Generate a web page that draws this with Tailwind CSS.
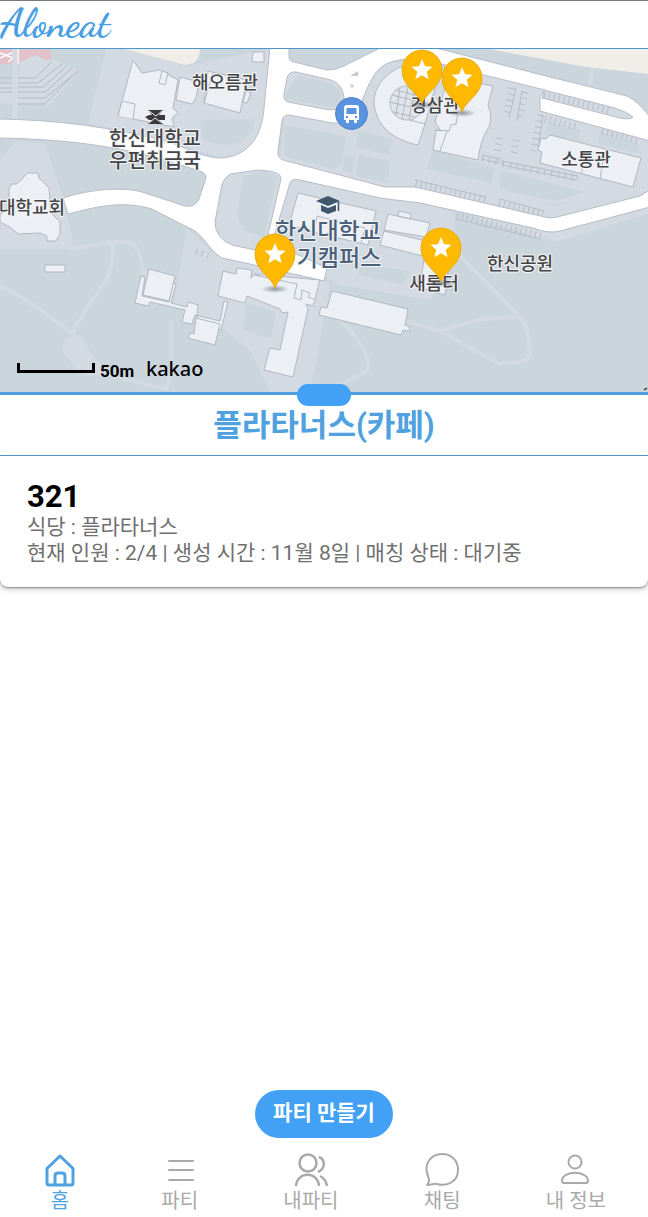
<!DOCTYPE html>
<html lang="ko">
<head>
<meta charset="utf-8">
<meta name="viewport" content="width=device-width, initial-scale=1">
<title>Aloneat</title>
<script src="https://cdn.jsdelivr.net/npm/@tailwindcss/browser@4"></script>
</head>
<body class="bg-white font-[Roboto,'Noto_Sans_CJK_KR',sans-serif]">
<div class="flex min-h-screen flex-col">
  <header class="flex h-[49px] items-center border-t border-b border-t-[#77777c] border-b-[#4b97cb]">
    <h1 class="pb-1 font-['Dancing_Script',cursive] text-[40px] font-bold leading-none text-[#4a9fe3]">Aloneat</h1>
  </header>

  <section aria-label="지도" class="h-[346px] border-b-3 border-[#4f9fe0]">
    <svg class="block h-full w-full" viewBox="0 49 648 343" preserveAspectRatio="xMidYMid slice" role="img" aria-label="한신대학교 주변 지도">
      <defs>
        <radialGradient id="pin-shadow"><stop offset="0" stop-color="#555b66" stop-opacity=".6"/><stop offset="1" stop-color="#555b66" stop-opacity="0"/></radialGradient>
        <g id="pin">
          <ellipse cx="0" cy="1" rx="14" ry="4" fill="url(#pin-shadow)"/>
          <path d="M0 0C-3-11-20-17-20-34a20 20 0 0 1 40 0C20-17 3-11 0 0Z" fill="#ffb900" stroke="#e5a50c" stroke-width=".8"/>
          <path d="M0-45l3 7.2 7.600.6-5.800 5 1.800 7.400L0-28.800l-6.600 4 1.800-7.400-5.800-5 7.600-.6Z" fill="#fff"/>
        </g>
      </defs>
      <rect y="49" width="648" height="343" fill="#cbd5dc"/>

      <!-- paved ground -->
      <g fill="#d4dae2">
        <path d="M106 49H130L185 66 270 49 263 130 245 155 222 158 170 142 88 123Z"/>
        <path d="M0 85L50 58 78 71 50 105 0 103Z"/>
        <path d="M15 141L45 144 58 182 63 198 73 241 70 249 0 249V160Z"/>
        <path d="M187 228L215 255 330 283 322 330 310 392H270L250 350 215 322 174 302Z"/>
        <path d="M285 113L345 122 358 110 370 77 390 62 648 90V195L552 218 420 188 385 187 280 160Z"/>
        <path d="M292 179L430 205 455 212 452 260 430 300 340 285 272 243Z"/>
        <path d="M222 178L243 172 262 171 238 240 222 240 215 222Z"/>
        <path d="M455 212L530 229 553 233 648 208V214L555 242Z"/>
        <path d="M66 340L80 334 96 360 110 376 82 376 61 350Z"/>
      </g>
      <path d="M125 49H205L194 63 185 65ZM488 49H648V74L585 67Z" fill="#f1eee9"/>
      <path d="M0 49H50L52 58 40 64H0Z" fill="#e2c1c8"/>
      <path d="M0 58L18 50M8 62L18 54M0 53L18 60M18 49V64" stroke="#fff" stroke-width="1.500"/>
      <path d="M20 62L36 55 50 62 51 72 40 78H20Z" fill="#d4dae2"/>
      <g fill="#cbd5dc">
        <path d="M200 120L255 119C252 144 230 151 203 139ZM198 65L225 53 238 49H200Z"/>
        <path d="M284 125L346 136 342 162 335 169 284 156ZM358 130L392 139 389 155 356 147ZM359 154L390 161 388 183 356 176ZM345 155L355 157 352 173 342 170Z"/>
        <path d="M433 150L495 168 492 183 427 169ZM500 170L588 193 555 207 500 188ZM550 122L580 130 578 141 543 134ZM600 131L636 142 641 154 598 144Z"/>
        <path d="M350 262L410 271 404 285 360 275ZM247 303L276 312 271 338 243 330ZM258 324L273 328 271 338 255 334Z"/>
      </g>
      <path d="M433 49L550 77 590 85 630 97 648 116V74L585 67 488 49Z" fill="#cbd5dc"/>
      <path d="M592 68L590 84" stroke="#d4dae2" stroke-width="4"/>

      <!-- footpaths -->
      <g fill="none" stroke="#d4dae2" stroke-width="4">
        <path d="M70 249L112 242H128C140 244 140 260 145 276M113 243C113 290 98 282 72 333M0 286C30 300 46 314 72 333L105 374 165 389M171 320V370L166 390"/>
        <path d="M456 252L520 317C527 325 530 340 530 353 528 364 515 362 500 364L440 331 320 296M440 331L480 319 520 317M335 318C350 325 375 358 366 372L325 392M430 178L555 203 588 193"/>
        <path d="M15 49V120" stroke-width="5"/>
      </g>
      <g fill="none" stroke="#b4bac4">
        <path d="M0 78H12M18 78H35L52 62M0 83H12M18 83H38L62 64M0 88H12M18 87H43L67 66M0 92H12M18 92H45L72 68M18 98H45L78 71M18 104H45L72 76"/>
      </g>

      <!-- roads -->
      <g fill="#fff" stroke="#b7bdc8" stroke-width="1">
        <path d="M-2 119C60 120 110 127 170 142C190 150 205 158 222 158C248 156 262 137 264 108L270 47H289V57Q289 61 294 62L327 70Q337 70 344 66L382 47H420L440 49 550 77 595 88 627 96Q638 101 650 117V141L540 111V97L545 90 484 75 445 65C425 58 400 57 386 64C371 72 367 91 358 110C352 126 334 124 322 121L289 115Q283 115 282 121L278 151Q277 158 283 160L385 187H415L545 217Q550 219 557 217L640 196 650 190V207L560 231Q548 234 533 228L420 203 380 198 300 180Q292 178 290 183L272 243 327 268 324 281 250 264 222 258C207 249 203 232 187 227L152 209C120 200 96 207 68 214L63 198C90 189 126 186 145 193L185 206Q197 208 200 196L206 178Q206 173 200 171L158 158C110 145 60 139-2 138Z"/>
      </g>
      <g fill="#d4dae2" stroke="#b7bdc8">
        <path d="M296 72L331 80Q343 84 344 98 344 110 330 110L288 102Q283 100 284 94L287 78Q289 71 296 72Z"/>
        <path d="M230 174L258 170Q282 171 281 179L268 235 255 250 232 245Q215 238 215 222L222 184Q224 178 230 174Z"/>
        <path d="M544 90L615 108Q627 112 633 117 632 120 620 118L542 98Z"/>
      </g>
      <path d="M297 75L330 83Q341 88 341 98 340 108 330 107L286 99V94ZM243 177L260 171Q280 174 277 180L264 237 243 230 237 215Z" fill="#cbd5dc"/>
      <path d="M350 76L358 71V76ZM350 84L354 85 352 89Z" fill="#c5c9d0"/>

      <!-- parking bays -->
      <g fill="none" stroke="#b7bdc8" stroke-width="7">
        <path d="M544 95L612 111M545 119L578 127M602 132L640 141" stroke-dasharray="1 4"/>
        <path d="M499 203L543 214M457 216L541 236M416 183L486 200" stroke-dasharray="1 4"/>
        <path d="M512 88L506 117M525 92L519 120M541 115L533 151M500 138L497 152M516 140L513 155M196 252L208 256" stroke-dasharray="1 5"/>
        <path d="M503 164L578 178M482 158L500 162" stroke-dasharray="1 6"/>
      </g>
      <g fill="none" stroke="#b7bdc8">
        <path d="M516 88L509 118M522 91L517 121M543 115L538 150M502 161L578 176 576 180 502 165ZM483 155L500 159 498 163 482 159ZM415 180L486 197M500 199L544 211M456 219L540 239"/>
      </g>

      <!-- buildings -->
      <g fill="#ecf0f4" stroke="#b2b8c1" stroke-width="1">
        <path d="M133 60L142 73 160 70 178 80 173 108 178 113 172 118 174 127 118 116Z"/>
        <path d="M118 116L122 101 135 104 133 119M162 71L168 73 165 85 159 83ZM180 77L199 82 196 98 192 104 176 100Z"/>
        <path d="M208 71L247 80 240 113 204 103ZM246 91L251 93 247 103 243 102ZM213 72L204 103M253 52H264V62H252Z"/>
        <path d="M9 188L12 184 17 184 22 179 27 173H38L39 178 49 188 51 213 60 222V234L56 241H47V236L40 233 18 234 10 227 0 222V215L9 207Z"/>
        <path d="M45 265H65V272H45Z"/>
        <path d="M141 276L135 303 149 306 150 302 185 310 182 322 192 324 195 315 220 321 224 301 228 302 221 330 217 329 197 319 198 305 188 302 187 307 171 303 176 284 173 283 169 302 142 296 145 277Z"/>
        <path d="M149 269L175 276 169 301 143 295ZM196 318L220 324 215 345 188 338 190 333 194 334Z"/>
        <path d="M223 271L236 274 237 268 252 270 251 278 254 274 320 280 313 306 306 304 308 309 293 377 264 370 270 348 280 350 288 312 282 313 280 309 247 296 245 303 218 296Z"/>
        <path d="M254 275L297 284 294 298 301 300 302 290 310 293 308 297 314 299" fill="none"/>
        <path d="M332 291L408 309 405 325 410 327 409 331 403 330 401 335 319 315 321 307 327 308Z"/>
        <path d="M298 193L376 211 368 245 313 232 289 225ZM317 216L365 228 361 243M317 216L314 231"/>
        <path d="M388 214L430 223 426 237 384 230ZM384 231L426 241 422 256 380 245ZM399 211L411 214 410 219 398 216Z"/>
        <path d="M425 255L451 260 448 273 445 295 419 287Z"/>
        <path d="M400 67C383 75 374 88 374 103C376 126 393 140 418 145L425 124 441 67Z"/>
        <circle cx="407" cy="103" r="17" fill="#dfe4ea"/>
        <path d="M448 77L493 86 488 105Q493 117 489 127 480 140 478 160L433 150 436 130 441 131 435 122Z"/>
        <path d="M409 120L426 124M436 130L449 131 451 125 456 124 458 113M447 131L440 151" fill="none"/>
        <path d="M550 135L641 158 633 187 540 163 542 152 538 150 541 138 546 139ZM582 165V174M603 160L600 179"/>
      </g>
      <path d="M392 95L424 103M390 102L423 110M393 112L415 117M400 88L396 115M408 87L402 119M415 88L409 119M395 90L423 97" stroke="#b2b8c1" fill="none"/>

      <!-- place symbols -->
      <path d="M148 110H163L159 115 165 115V120L159 120 163 124H148L152 120H149L145 117 149 115H152Z" fill="#3b3b3d"/>
      <path d="M149 111L156 116 162 111M149 123L155 118 162 123" fill="none" stroke="#ecf0f4" stroke-width="1"/>
      <circle cx="351.500" cy="113.500" r="16" fill="#5a93e0" stroke="#4f80c9"/>
      <path d="M347 105H356Q359 105 359 108V120H357V123H354V120H349V123H346V120H344V108Q344 105 347 105Z" fill="#fff"/>
      <path d="M346.500 108H356.500V114H346.500Z" fill="#5a93e0"/>
      <path d="M346 117H348M355 117H357" stroke="#5a93e0" stroke-width="2"/>
      <path d="M316 201L328 196 340 201 328 206ZM321 205L328 208 336 205V211L328 214 321 211Z" fill="#3f566f"/>
      <path d="M338.500 202V211" stroke="#3f566f" stroke-width="1.500"/>

      <!-- labels -->
      <g class="font-['Noto_Sans_CJK_KR',sans-serif] font-medium" fill="#444447" stroke="#f3f5f7" stroke-width="2" paint-order="stroke" stroke-linejoin="round" text-anchor="middle" font-size="18">
        <text x="225" y="89">해오름관</text>
        <text x="155" y="146" font-size="20">한신대학교</text>
        <text x="155" y="168" font-size="20">우편취급국</text>
        <text x="32" y="214">대학교회</text>
        <text x="435" y="112">경삼관</text>
        <text x="586" y="166">소통관</text>
        <text x="520" y="270">한신공원</text>
        <text x="434" y="290">새롬터</text>
        <g fill="#4a6078" font-size="23">
          <text x="328" y="239">한신대학교</text>
          <text x="339" y="266">기캠퍼스</text>
        </g>
      </g>
      <use href="#pin" x="422" y="104"/>
      <use href="#pin" x="462" y="112"/>
      <use href="#pin" x="275" y="288"/>
      <use href="#pin" x="441" y="282"/>

      <path d="M18.500 363V371.500H93.500V363" fill="none" stroke="#000" stroke-width="3"/>
      <text x="100" y="377" class="font-[Roboto,sans-serif] font-bold" font-size="17">50m</text>
      <text x="146" y="376" class="font-['Noto_Sans',sans-serif] font-medium" font-size="20">kakao</text>
      <path d="M644 390L647 388" stroke="#333" stroke-width="1.500"/>
    </svg>
  </section>

  <section class="relative flex h-[61px] items-center justify-center border-b border-[#4b97cb]">
    <button type="button" aria-label="목록 펼치기" class="absolute -top-[11px] left-1/2 h-[22px] w-[54px] -translate-x-1/2 rounded-full bg-[#42a1f5]"></button>
    <h2 class="text-[31px] font-bold leading-none text-[#4fa1e0]">플라타너스(카페)</h2>
  </section>

  <main class="flex flex-1 flex-col">
    <article class="rounded-b-lg bg-white px-[27px] pt-6 pb-[21px] shadow-[0_1px_2px_rgba(0,0,0,0.4),0_3px_6px_rgba(0,0,0,0.16)]">
      <h3 class="text-[31px] font-bold leading-[34px] text-black">321</h3>
      <p class="text-[21px] leading-[26px] text-[#707070]">식당 : 플라타너스</p>
      <p class="text-[21px] leading-[26px] text-[#707070]">현재 인원 : 2/4 | 생성 시간 : 11월 8일 | 매칭 상태 : 대기중</p>
    </article>
    <button type="button" class="mx-auto mt-auto h-12 rounded-full bg-[#42a1f5] px-[18px] text-[21px] font-bold text-white">파티 만들기</button>
  </main>

  <nav aria-label="메뉴" class="flex h-[79px] justify-between pt-3.5 pr-[42px] pl-11 text-xl leading-[26px] text-[#a9a9a9]">
    <a href="#home" aria-current="page" class="flex flex-col items-center text-[#4fa1e0]">
      <svg class="h-9 w-8" viewBox="0 0 32 36" fill="none" stroke="currentColor" stroke-width="3" stroke-linejoin="round"><path d="M3 16.500L16 4 29 16.500V31Q29 33 27 33H5Q3 33 3 31Z"/><path d="M11 33V24Q11 21 14 21H18Q21 21 21 24V33"/></svg>
      <span>홈</span>
    </a>
    <a href="#party" class="flex flex-col items-center">
      <svg class="h-9 w-8" viewBox="0 0 32 36" fill="none" stroke="currentColor" stroke-width="2" stroke-linecap="round"><path d="M5 9H29M5 18H29M5 28H29"/></svg>
      <span>파티</span>
    </a>
    <a href="#my-party" class="flex flex-col items-center">
      <svg class="h-9 w-9" viewBox="0 0 36 36" fill="none" stroke="currentColor" stroke-width="2.500"><circle cx="15" cy="11" r="8.500"/><path d="M3 34C4 19 25 19 26 34M26 5C33 8 32 17 25 20M27 24Q33 27 34 34"/></svg>
      <span>내파티</span>
    </a>
    <a href="#chat" class="flex flex-col items-center">
      <svg class="h-9 w-9" viewBox="0 0 36 36" fill="none" stroke="currentColor" stroke-width="2" stroke-linejoin="round"><path d="M3 33C6 29 5 28 4 24C-1 12 7 2 18 2C28 2 34 9 34 18C34 29 24 35 13 32C10 31 8 33 3 33Z"/></svg>
      <span>채팅</span>
    </a>
    <a href="#profile" class="flex flex-col items-center">
      <svg class="h-9 w-8" viewBox="0 0 32 36" fill="none" stroke="currentColor" stroke-width="2" stroke-linejoin="round"><circle cx="15" cy="10" r="6.500"/><path d="M2 29C2 18 28 18 28 29Q28 31 26 31H4Q2 31 2 29Z"/></svg>
      <span>내 정보</span>
    </a>
  </nav>
</div>
</body>
</html>
